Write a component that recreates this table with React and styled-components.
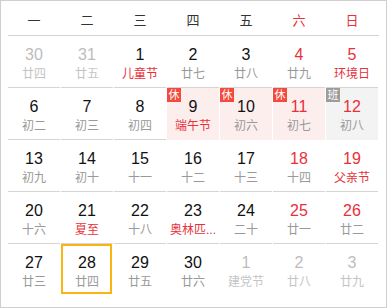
import React from 'react';
import styled, { createGlobalStyle } from 'styled-components';

const GlobalStyle = createGlobalStyle`
  html, body {
    margin: 0;
    padding: 0;
    background: #fff;
  }
  body {
    font-family: "Liberation Sans", "Noto Sans CJK SC", sans-serif;
  }
`;

const RED = '#e8303a';

const Panel = styled.div`
  width: 387px;
  height: 308px;
  box-sizing: border-box;
  border: 1px solid #cfcfcf;
  padding: 0 7px;
  background: #fff;
`;

const WeekHeader = styled.div`
  display: grid;
  grid-template-columns: repeat(7, 52px);
  column-gap: 1px;
  height: 34px;
  border-bottom: 1px solid #d2d2d2;
`;

const WeekDay = styled.div`
  display: flex;
  align-items: center;
  justify-content: center;
  padding-top: 2px;
  font-size: 13px;
  color: ${p => (p.$weekend ? RED : '#333')};
`;

const DayGrid = styled.div`
  display: grid;
  grid-template-columns: repeat(7, 52px);
  column-gap: 1px;
`;

const bgFor = kind =>
  kind === 'rest' ? '#fdeeee' : kind === 'work' ? '#f3f3f3' : 'transparent';

const Cell = styled.div`
  position: relative;
  height: 52px;
  box-sizing: border-box;
  padding-top: 9px;
  border-bottom: 1px solid ${p => (p.$kind ? bgFor(p.$kind) : '#d5d5d5')};
  background: ${p => bgFor(p.$kind)};
  text-align: center;

  &:nth-last-child(-n + 7) {
    border-bottom-color: transparent;
  }
`;

const DayNum = styled.div`
  font-family: "Liberation Sans", Arial, sans-serif;
  font-size: 16px;
  line-height: 20px;
  color: ${p => (p.$muted ? '#bdbdbd' : p.$red ? RED : '#111')};
`;

const Lunar = styled.div`
  font-size: 12px;
  line-height: 18px;
  white-space: nowrap;
  color: ${p => (p.$muted ? '#c4c4c4' : p.$fest ? RED : '#999')};
`;

const Badge = styled.span`
  position: absolute;
  top: 0;
  left: 0;
  width: 14px;
  height: 14px;
  font-size: 11px;
  line-height: 14px;
  text-align: center;
  color: #fff;
  background: ${p => (p.$work ? '#9c9c9c' : '#f24a3c')};
`;

const SelectedRing = styled.span`
  position: absolute;
  top: 0;
  left: 0;
  right: 1px;
  bottom: 1px;
  border: 2px solid #fbb512;
  pointer-events: none;
`;

const weekdays = ['一', '二', '三', '四', '五', '六', '日'];

const days = [
  { d: 30, l: '廿四', muted: true },
  { d: 31, l: '廿五', muted: true },
  { d: 1, l: '儿童节', fest: true },
  { d: 2, l: '廿七' },
  { d: 3, l: '廿八' },
  { d: 4, l: '廿九', red: true },
  { d: 5, l: '环境日', red: true, fest: true },

  { d: 6, l: '初二' },
  { d: 7, l: '初三' },
  { d: 8, l: '初四' },
  { d: 9, l: '端午节', fest: true, kind: 'rest' },
  { d: 10, l: '初六', kind: 'rest' },
  { d: 11, l: '初七', red: true, kind: 'rest' },
  { d: 12, l: '初八', red: true, kind: 'work' },

  { d: 13, l: '初九' },
  { d: 14, l: '初十' },
  { d: 15, l: '十一' },
  { d: 16, l: '十二' },
  { d: 17, l: '十三' },
  { d: 18, l: '十四', red: true },
  { d: 19, l: '父亲节', red: true, fest: true },

  { d: 20, l: '十六' },
  { d: 21, l: '夏至', fest: true },
  { d: 22, l: '十八' },
  { d: 23, l: '奥林匹...', fest: true },
  { d: 24, l: '二十' },
  { d: 25, l: '廿一', red: true },
  { d: 26, l: '廿二', red: true },

  { d: 27, l: '廿三' },
  { d: 28, l: '廿四', selected: true },
  { d: 29, l: '廿五' },
  { d: 30, l: '廿六' },
  { d: 1, l: '建党节', muted: true },
  { d: 2, l: '廿八', muted: true },
  { d: 3, l: '廿九', muted: true },
];

const App = () => {
  return (
    <>
      <GlobalStyle />
      <Panel>
        <WeekHeader>
          {weekdays.map((w, i) => (
            <WeekDay key={w} $weekend={i > 4}>{w}</WeekDay>
          ))}
        </WeekHeader>
        <DayGrid>
          {days.map((day, i) => (
            <Cell key={i} $kind={day.kind}>
              {day.kind === 'rest' && <Badge>休</Badge>}
              {day.kind === 'work' && <Badge $work>班</Badge>}
              <DayNum $muted={day.muted} $red={day.red}>{day.d}</DayNum>
              <Lunar $muted={day.muted} $fest={day.fest}>{day.l}</Lunar>
              {day.selected && <SelectedRing />}
            </Cell>
          ))}
        </DayGrid>
      </Panel>
    </>
  );
};

export default App;
